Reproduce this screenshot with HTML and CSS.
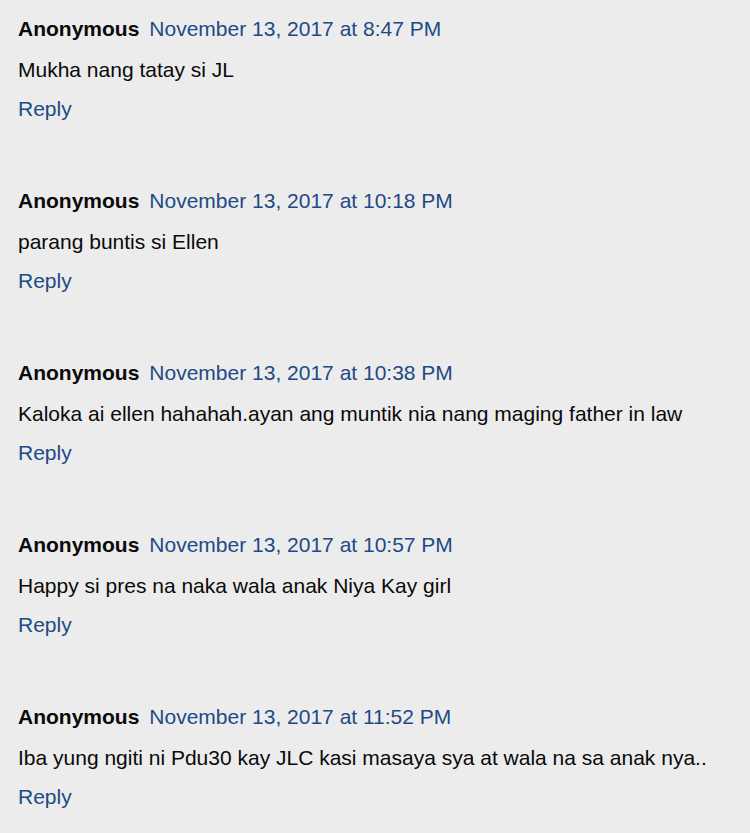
FILE: index.html
```html
<!DOCTYPE html>
<html>
<head>
<meta charset="utf-8">
<link rel="stylesheet" href="styles.css">
</head>
<body>
<div class="comments">
  <div class="comment">
    <div class="head"><span class="author">Anonymous</span><a class="date" href="#">November 13, 2017 at 8:47 PM</a></div>
    <p class="body">Mukha nang tatay si JL</p>
    <a class="reply" href="#">Reply</a>
  </div>
  <div class="comment">
    <div class="head"><span class="author">Anonymous</span><a class="date" href="#">November 13, 2017 at 10:18 PM</a></div>
    <p class="body">parang buntis si Ellen</p>
    <a class="reply" href="#">Reply</a>
  </div>
  <div class="comment">
    <div class="head"><span class="author">Anonymous</span><a class="date" href="#">November 13, 2017 at 10:38 PM</a></div>
    <p class="body">Kaloka ai ellen hahahah.ayan ang muntik nia nang maging father in law</p>
    <a class="reply" href="#">Reply</a>
  </div>
  <div class="comment">
    <div class="head"><span class="author">Anonymous</span><a class="date" href="#">November 13, 2017 at 10:57 PM</a></div>
    <p class="body">Happy si pres na naka wala anak Niya Kay girl</p>
    <a class="reply" href="#">Reply</a>
  </div>
  <div class="comment">
    <div class="head"><span class="author">Anonymous</span><a class="date" href="#">November 13, 2017 at 11:52 PM</a></div>
    <p class="body">Iba yung ngiti ni Pdu30 kay JLC kasi masaya sya at wala na sa anak nya..</p>
    <a class="reply" href="#">Reply</a>
  </div>
</div>
</body>
</html>
```
FILE: styles.css
```css
html, body {
  margin: 0;
  padding: 0;
  background: #ececec;
}
body {
  font-family: "Liberation Sans", Arial, sans-serif;
  font-size: 21px;
  color: #0a0a0a;
}
.comments {
  display: flex;
  flex-direction: column;
  gap: 52px;
  padding: 9px 0 0 18px;
}
.comment {
  display: flex;
  flex-direction: column;
}
.head {
  height: 40px;
  line-height: 40px;
  display: flex;
  gap: 10px;
}
.author {
  font-weight: bold;
}
.date, .reply {
  color: #1d4a85;
  text-decoration: none;
}
.body {
  margin: 0;
  height: 40px;
  line-height: 42px;
}
.reply {
  line-height: 40px;
  height: 40px;
  align-self: flex-start;
}
```
